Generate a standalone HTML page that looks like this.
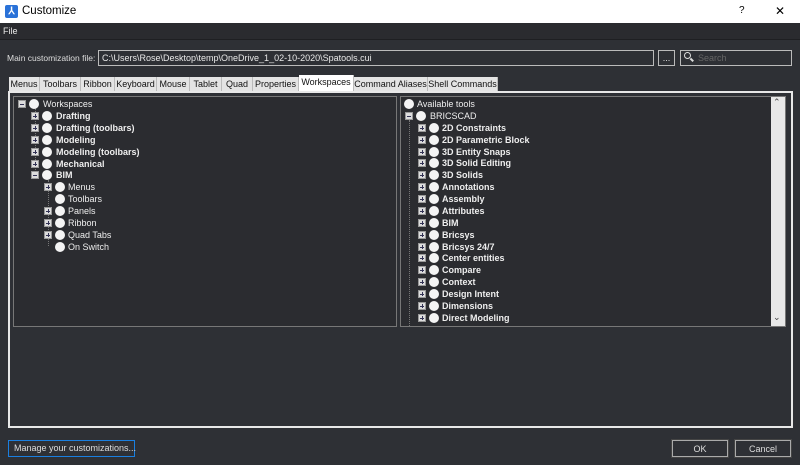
<!DOCTYPE html>
<html><head><meta charset="utf-8"><style>
*{margin:0;padding:0;box-sizing:border-box}
body{width:800px;height:465px;background:#2e3035;font-family:"Liberation Sans",sans-serif;font-size:9px;color:#e8e8e8;position:relative;overflow:hidden}
.a{position:absolute;white-space:nowrap}
.title{left:0;top:0;width:800px;height:23px;background:#fff;color:#000}
.menu{left:0;top:23px;width:800px;height:17px;background:#2a2b2f;border-bottom:1px solid #1e1f22}
.tab{position:absolute;top:77px;height:14px;background:#e4e4e4;color:#111;font-size:9px;line-height:14px;text-align:center;border-right:1px solid #bbb}
.tab.sel{background:#fff;top:75px;height:16px}
.box{position:absolute;width:8px;height:8px;border:1px solid #999;background:#ddd}
.box:before{content:"";position:absolute;left:1px;top:2.5px;width:4px;height:1px;background:#335}
.box.p:after{content:"";position:absolute;left:2.5px;top:1px;width:1px;height:4px;background:#335}
.c{position:absolute;width:10px;height:10px;border-radius:50%;background:#f4f4f4}
.t{position:absolute;white-space:nowrap;line-height:12px;color:#eee}
.b{font-weight:bold}
.btn{position:absolute;border:1px solid #aaa;outline:1px solid #444;text-align:center;line-height:16px;color:#ddd}
</style></head><body>
<div class="a title">
 <div class="a" style="left:5px;top:5px;width:13px;height:13px;background:#2a72d8;border-radius:2px;color:#fff;font-size:10px;line-height:13px;text-align:center;font-weight:bold">⅄</div>
 <div class="a" style="left:22px;top:5px;font-size:11.5px">Customize</div>
 <div class="a" style="left:739px;top:5px;font-size:10px">?</div>
 <div class="a" style="left:775px;top:4px;font-size:12px">✕</div>
</div>
<div class="a menu"><div class="a" style="left:3px;top:3px">File</div></div>
<div class="a" style="left:7px;top:53px;color:#ddd;font-size:8.5px">Main customization file:</div>
<div class="a" style="left:98px;top:50px;width:556px;height:16px;border:1px solid #bbb;padding-left:3px;line-height:14px">C:\Users\Rose\Desktop\temp\OneDrive_1_02-10-2020\Spatools.cui</div>
<div class="a" style="left:658px;top:50px;width:17px;height:16px;border:1px solid #bbb;text-align:center;line-height:14px">...</div>
<div class="a" style="left:680px;top:50px;width:112px;height:16px;border:1px solid #bbb;padding-left:17px;line-height:14px;color:#666">Search</div>
<div class="a" style="left:684px;top:52px;width:7px;height:7px;border:1.5px solid #ddd;border-radius:50%"></div>
<div class="a" style="left:690px;top:59px;width:4px;height:1.5px;background:#ddd;transform:rotate(45deg)"></div>

<div class="tab" style="left:9px;width:31px">Menus</div>
<div class="tab" style="left:40px;width:41px">Toolbars</div>
<div class="tab" style="left:81px;width:34px">Ribbon</div>
<div class="tab" style="left:115px;width:42px">Keyboard</div>
<div class="tab" style="left:157px;width:33px">Mouse</div>
<div class="tab" style="left:190px;width:32px">Tablet</div>
<div class="tab" style="left:222px;width:31px">Quad</div>
<div class="tab" style="left:253px;width:46px">Properties</div>
<div class="tab sel" style="left:299px;width:55px">Workspaces</div>
<div class="tab" style="left:354px;width:74px">Command Aliases</div>
<div class="tab" style="left:428px;width:70px">Shell Commands</div>

<div class="a" style="left:8px;top:91px;width:785px;height:337px;border:2px solid #e8e8e8"></div>
<div class="a" style="left:13px;top:96px;width:384px;height:231px;border:1px solid #777;background:#2b2c30"></div>
<div class="a" style="left:400px;top:96px;width:386px;height:231px;border:1px solid #777;background:#2b2c30"></div>
<div class="a" style="left:771px;top:97px;width:14px;height:229px;background:#e8e8e8"></div>
<div class="a" style="left:773px;top:97px;color:#444;font-size:9px">⌃</div>
<div class="a" style="left:773px;top:312px;color:#444;font-size:9px">⌄</div>

<!-- left tree -->
<div class="a" style="left:35px;top:108px;width:1px;height:68px;border-left:1px dotted #777"></div>
<div class="a" style="left:48px;top:180px;width:1px;height:66px;border-left:1px dotted #777"></div>
<div class="box" style="left:18px;top:100px"></div><div class="c" style="left:29px;top:99px"></div><div class="t" style="left:43px;top:98px">Workspaces</div>
<div class="box p" style="left:31px;top:112px"></div><div class="c" style="left:42px;top:111px"></div><div class="t b" style="left:56px;top:110px">Drafting</div>
<div class="box p" style="left:31px;top:124px"></div><div class="c" style="left:42px;top:123px"></div><div class="t b" style="left:56px;top:122px">Drafting (toolbars)</div>
<div class="box p" style="left:31px;top:136px"></div><div class="c" style="left:42px;top:135px"></div><div class="t b" style="left:56px;top:134px">Modeling</div>
<div class="box p" style="left:31px;top:148px"></div><div class="c" style="left:42px;top:147px"></div><div class="t b" style="left:56px;top:146px">Modeling (toolbars)</div>
<div class="box p" style="left:31px;top:160px"></div><div class="c" style="left:42px;top:159px"></div><div class="t b" style="left:56px;top:158px">Mechanical</div>
<div class="box" style="left:31px;top:171px"></div><div class="c" style="left:42px;top:170px"></div><div class="t b" style="left:56px;top:169px">BIM</div>
<div class="box p" style="left:44px;top:183px"></div><div class="c" style="left:55px;top:182px"></div><div class="t" style="left:68px;top:181px">Menus</div>
<div class="c" style="left:55px;top:194px"></div><div class="t" style="left:68px;top:193px">Toolbars</div>
<div class="box p" style="left:44px;top:207px"></div><div class="c" style="left:55px;top:206px"></div><div class="t" style="left:68px;top:205px">Panels</div>
<div class="box p" style="left:44px;top:219px"></div><div class="c" style="left:55px;top:218px"></div><div class="t" style="left:68px;top:217px">Ribbon</div>
<div class="box p" style="left:44px;top:231px"></div><div class="c" style="left:55px;top:230px"></div><div class="t" style="left:68px;top:229px">Quad Tabs</div>
<div class="c" style="left:55px;top:242px"></div><div class="t" style="left:68px;top:241px">On Switch</div>

<!-- right tree -->
<div class="a" style="left:409px;top:120px;width:1px;height:206px;border-left:1px dotted #777"></div>
<div class="c" style="left:404px;top:99px"></div><div class="t" style="left:417px;top:98px">Available tools</div>
<div class="box" style="left:405px;top:112px"></div><div class="c" style="left:416px;top:111px"></div><div class="t" style="left:430px;top:110px">BRICSCAD</div>
<div class="box p" style="left:418px;top:124px"></div><div class="c" style="left:429px;top:123px"></div><div class="t b" style="left:442px;top:122px">2D Constraints</div>
<div class="box p" style="left:418px;top:136px"></div><div class="c" style="left:429px;top:135px"></div><div class="t b" style="left:442px;top:134px">2D Parametric Block</div>
<div class="box p" style="left:418px;top:148px"></div><div class="c" style="left:429px;top:147px"></div><div class="t b" style="left:442px;top:146px">3D Entity Snaps</div>
<div class="box p" style="left:418px;top:159px"></div><div class="c" style="left:429px;top:158px"></div><div class="t b" style="left:442px;top:157px">3D Solid Editing</div>
<div class="box p" style="left:418px;top:171px"></div><div class="c" style="left:429px;top:170px"></div><div class="t b" style="left:442px;top:169px">3D Solids</div>
<div class="box p" style="left:418px;top:183px"></div><div class="c" style="left:429px;top:182px"></div><div class="t b" style="left:442px;top:181px">Annotations</div>
<div class="box p" style="left:418px;top:195px"></div><div class="c" style="left:429px;top:194px"></div><div class="t b" style="left:442px;top:193px">Assembly</div>
<div class="box p" style="left:418px;top:207px"></div><div class="c" style="left:429px;top:206px"></div><div class="t b" style="left:442px;top:205px">Attributes</div>
<div class="box p" style="left:418px;top:219px"></div><div class="c" style="left:429px;top:218px"></div><div class="t b" style="left:442px;top:217px">BIM</div>
<div class="box p" style="left:418px;top:231px"></div><div class="c" style="left:429px;top:230px"></div><div class="t b" style="left:442px;top:229px">Bricsys</div>
<div class="box p" style="left:418px;top:243px"></div><div class="c" style="left:429px;top:242px"></div><div class="t b" style="left:442px;top:241px">Bricsys 24/7</div>
<div class="box p" style="left:418px;top:254px"></div><div class="c" style="left:429px;top:253px"></div><div class="t b" style="left:442px;top:252px">Center entities</div>
<div class="box p" style="left:418px;top:266px"></div><div class="c" style="left:429px;top:265px"></div><div class="t b" style="left:442px;top:264px">Compare</div>
<div class="box p" style="left:418px;top:278px"></div><div class="c" style="left:429px;top:277px"></div><div class="t b" style="left:442px;top:276px">Context</div>
<div class="box p" style="left:418px;top:290px"></div><div class="c" style="left:429px;top:289px"></div><div class="t b" style="left:442px;top:288px">Design Intent</div>
<div class="box p" style="left:418px;top:302px"></div><div class="c" style="left:429px;top:301px"></div><div class="t b" style="left:442px;top:300px">Dimensions</div>
<div class="box p" style="left:418px;top:314px"></div><div class="c" style="left:429px;top:313px"></div><div class="t b" style="left:442px;top:312px">Direct Modeling</div>

<div class="a" style="left:8px;top:440px;width:127px;height:17px;border:1px solid #1a7fe0;padding-left:5px;line-height:15px;color:#ddd">Manage your customizations...</div>
<div class="btn" style="left:672px;top:440px;width:56px;height:17px">OK</div>
<div class="btn" style="left:735px;top:440px;width:56px;height:17px">Cancel</div>
</body></html>
